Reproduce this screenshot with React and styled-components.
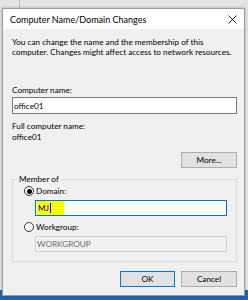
import React from "react";
import styled, { createGlobalStyle } from "styled-components";

const Global = createGlobalStyle`
  html, body { margin: 0; padding: 0; }
  body {
    width: 248px; height: 300px; overflow: hidden;
    font-family: Lato, "Noto Sans", "Liberation Sans", sans-serif;
    color: #000;
  }
  * { box-sizing: border-box; }
`;

const Desktop = styled.div`
  width: 248px;
  height: 300px;
  padding: 8px 3px 0 2px;
  background:
    linear-gradient(to right, transparent 19px, #bdbdbd 19px 20px, transparent 20px) 0 0 / 100% 8px no-repeat,
    linear-gradient(#e4e4e4 0 290px, #1a66bd 290px);
`;

const Dialog = styled.div`
  width: 243px;
  height: 288px;
  border: 1px solid #9b9b9b;
  background: #f0f0f0;
  display: flex;
  flex-direction: column;
  box-shadow: 0 0 3px rgba(0, 0, 0, 0.25);
  font-size: 8.2px;
`;

const TitleBar = styled.div`
  height: 20px;
  flex: none;
  background: #fff;
  display: flex;
  align-items: center;
  justify-content: space-between;
  padding: 0 7px 0 7px;
  font-size: 9px;
`;

const Body = styled.div`
  display: flex;
  flex-direction: column;
  padding: 0 7px 0 9px;
`;

const Text = styled.div`
  line-height: ${(p) => p.$lh || 10}px;
  margin-top: ${(p) => p.$mt || 0}px;
  white-space: nowrap;
`;

const Field = styled.div`
  height: ${(p) => p.$h || 17}px;
  margin-top: ${(p) => p.$mt || 0}px;
  margin-left: ${(p) => p.$ml || 0}px;
  border: 1px solid ${(p) => (p.$focus ? "#0078d7" : p.$disabled ? "#cfcfcf" : "#7a7a7a")};
  background: ${(p) => (p.$disabled ? "#f0f0f0" : "#fff")};
  color: ${(p) => (p.$disabled ? "#6d6d6d" : "#000")};
  display: flex;
  align-items: center;
  padding: 0 1px;
`;

const Highlight = styled.span`
  background: #ffff00;
  align-self: stretch;
  display: flex;
  align-items: center;
  width: 27px;
  padding-left: 1px;
`;

const Caret = styled.span`
  width: 1px;
  height: 10px;
  background: #000;
  margin-left: 1px;
`;

const Button = styled.div`
  width: ${(p) => p.$w || 56}px;
  height: 16px;
  background: #e1e1e1;
  border: 1px solid ${(p) => (p.$default ? "#0078d7" : "#adadad")};
  display: flex;
  align-items: center;
  justify-content: center;
  align-self: ${(p) => (p.$end ? "flex-end" : "auto")};
  margin-top: ${(p) => p.$mt || 0}px;
`;

const Group = styled.fieldset`
  margin: 6px 0 0 0;
  border: 1px solid #dcdcdc;
  padding: 0 9px 9px 4px;
  min-width: 0;
`;

const Legend = styled.legend`
  padding: 0 2px;
  line-height: 10px;
`;

const Inner = styled.div`
  display: flex;
  flex-direction: column;
  padding-left: 7px;
`;

const RadioRow = styled.div`
  display: flex;
  align-items: center;
  gap: 2px;
  height: 10px;
  margin-top: ${(p) => p.$mt || 0}px;
`;

const Radio = styled.span`
  width: 10px;
  height: 10px;
  border-radius: 50%;
  border: 1px solid #333;
  background: #fff;
  display: flex;
  align-items: center;
  justify-content: center;
  &::after {
    content: "";
    width: 5px;
    height: 5px;
    border-radius: 50%;
    background: ${(p) => (p.$checked ? "#000" : "transparent")};
  }
`;

const Buttons = styled.div`
  display: flex;
  justify-content: flex-end;
  gap: 6px;
  margin-top: 9px;
`;

function CloseIcon() {
  return (
    <svg width="9" height="9" viewBox="0 0 9 9">
      <path d="M0.5 0.5 L8.5 8.5 M8.5 0.5 L0.5 8.5" stroke="#000" strokeWidth="0.9" fill="none" />
    </svg>
  );
}

export default function App() {
  return (
    <>
      <Global />
      <Desktop>
        <Dialog>
          <TitleBar>
            <span>Computer Name/Domain Changes</span>
            <CloseIcon />
          </TitleBar>
          <Body>
            <Text $mt={8}>
              You can change the name and the membership of this
              <br />
              computer. Changes might affect access to network resources.
            </Text>
            <Text $mt={28}>Computer name:</Text>
            <Field $mt={2}>office01</Field>
            <Text $mt={7} $lh={11}>Full computer name:</Text>
            <Text $lh={11}>office01</Text>
            <Button $end $mt={9}>More...</Button>
            <Group>
              <Legend>Member of</Legend>
              <Inner>
                <RadioRow $mt={2}>
                  <Radio $checked />
                  <span>Domain:</span>
                </RadioRow>
                <Field $mt={4} $ml={11} $h={16} $focus>
                  <Highlight>
                    MJ<Caret />
                  </Highlight>
                </Field>
                <RadioRow $mt={6}>
                  <Radio />
                  <span>Workgroup:</span>
                </RadioRow>
                <Field $mt={4} $ml={11} $h={16} $disabled>WORKGROUP</Field>
              </Inner>
            </Group>
            <Buttons>
              <Button $w={55} $default>OK</Button>
              <Button>Cancel</Button>
            </Buttons>
          </Body>
        </Dialog>
      </Desktop>
    </>
  );
}
